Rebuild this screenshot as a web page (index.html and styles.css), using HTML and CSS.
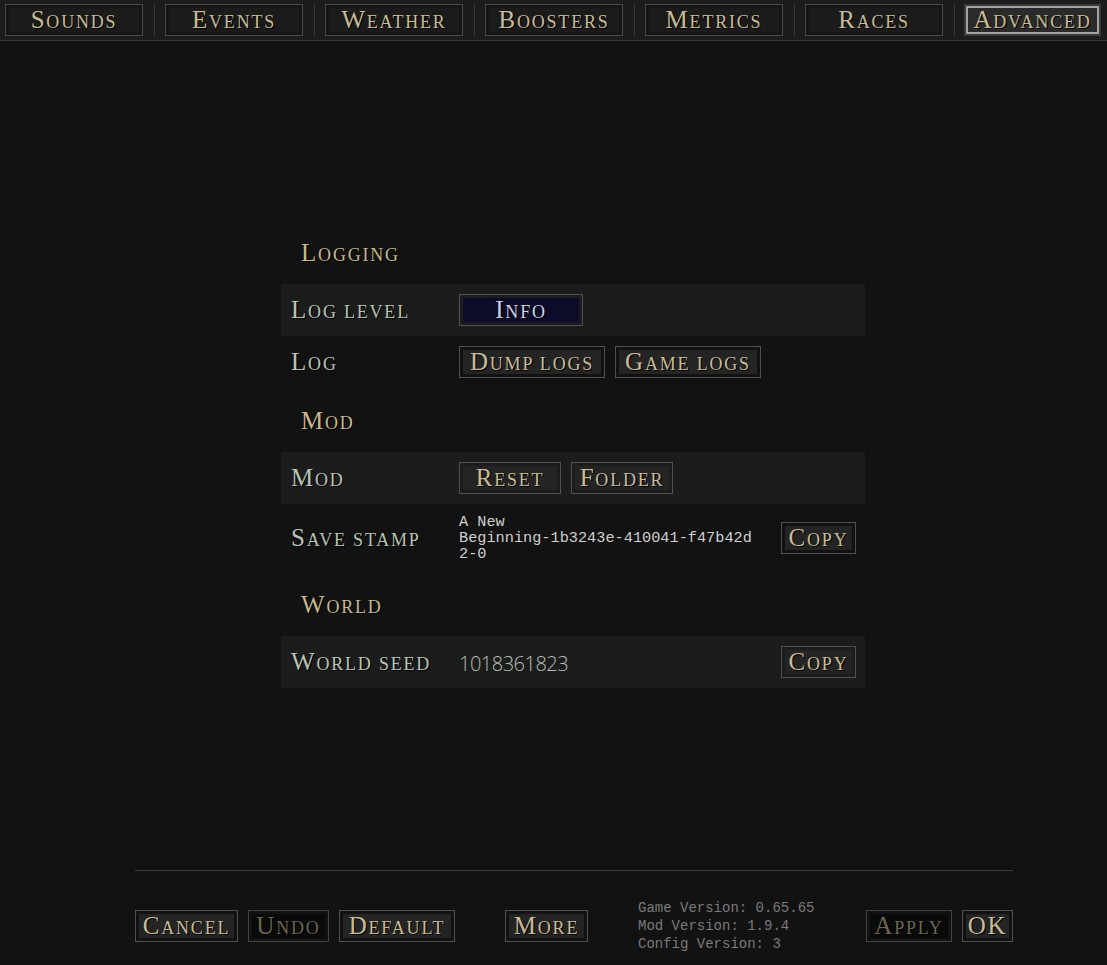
FILE: index.html
```html
<!DOCTYPE html>
<html>
<head>
<meta charset="utf-8">
<link rel="stylesheet" href="styles.css">
</head>
<body>
<div class="topbar">
  <div class="tab">Sounds</div><div class="sep"></div>
  <div class="tab">Events</div><div class="sep"></div>
  <div class="tab">Weather</div><div class="sep"></div>
  <div class="tab">Boosters</div><div class="sep"></div>
  <div class="tab">Metrics</div><div class="sep"></div>
  <div class="tab">Races</div><div class="sep"></div>
  <div class="tab tab-active">Advanced</div>
</div>

<div class="panel">
  <div class="section">Logging</div>
  <div class="row row-alt">
    <div class="label">Log level</div>
    <div class="controls">
      <div class="btn btn-select w-info">Info</div>
    </div>
  </div>
  <div class="row">
    <div class="label">Log</div>
    <div class="controls">
      <div class="btn w-logs">Dump logs</div>
      <div class="btn w-logs">Game logs</div>
    </div>
  </div>
  <div class="section">Mod</div>
  <div class="row row-alt">
    <div class="label">Mod</div>
    <div class="controls">
      <div class="btn w-reset">Reset</div>
      <div class="btn w-reset">Folder</div>
    </div>
  </div>
  <div class="row row-tall">
    <div class="label">Save stamp</div>
    <div class="controls">
      <div class="stamp"><span class="line">A New</span><span class="line">Beginning-1b3243e-410041-f47b42d</span><span class="line">2-0</span></div>
      <div class="btn w-copy push">Copy</div>
    </div>
  </div>
  <div class="section">World</div>
  <div class="row row-alt">
    <div class="label">World seed</div>
    <div class="controls">
      <div class="seed">1018361823</div>
      <div class="btn w-copy push">Copy</div>
    </div>
  </div>
</div>

<div class="footer">
  <div class="rule"></div>
  <div class="actions">
    <div class="btn w-cancel">Cancel</div>
    <div class="btn btn-disabled w-undo">Undo</div>
    <div class="btn w-default">Default</div>
    <div class="btn w-more gap-more">More</div>
    <div class="versions">
      <span class="line">Game Version: 0.65.65</span>
      <span class="line">Mod Version: 1.9.4</span>
      <span class="line">Config Version: 3</span>
    </div>
    <div class="btn btn-disabled w-apply">Apply</div>
    <div class="btn btn-caps w-ok">OK</div>
  </div>
</div>
</body>
</html>
```

FILE: styles.css
```css
* { box-sizing: border-box; }

html, body {
  margin: 0;
  padding: 0;
  background: #121212;
}

body {
  width: 1107px;
  height: 965px;
  overflow: hidden;
  font-family: "Liberation Serif", "Times New Roman", serif;
  font-size: 18px;
  text-transform: uppercase;
  letter-spacing: 1.8px;
}

/* emulated small caps: large initial, small capitals after */
.tab::first-letter,
.section::first-letter,
.label::first-letter,
.btn::first-letter {
  font-size: 25px;
}

/* ---------- top tab bar ---------- */
.topbar {
  height: 41px;
  background: #1c1c1c;
  border-bottom: 1px solid #383838;
  display: flex;
  align-items: flex-start;
  padding: 4px 0 0 5px;
}

.tab {
  flex: 0 0 138px;
  height: 32px;
  border: 1px solid #474747;
  padding: 3px;
  background: #1b1b1b;
  background-clip: content-box;
  box-shadow: inset 0 0 0 3px #151515;
  color: #c8bc94;
  text-shadow: 1px 1px 0 #000;
  text-align: center;
  line-height: 24px;
  white-space: nowrap;
}

.tab-active {
  border: 1px solid #3a3a3a;
  box-shadow: inset 0 0 0 1px #3a3a3a, inset 0 0 0 3px #a2a2a2;
  background: #2a2a2a;
  background-clip: border-box;
  flex-basis: 137px;
  margin-left: -1px;
}

.sep {
  flex: 0 0 1px;
  height: 32px;
  background: #363636;
  margin: 0 10px 0 11px;
}

/* ---------- settings panel ---------- */
.panel {
  width: 584px;
  margin: 179px 0 0 281px;
}

.section {
  height: 64px;
  line-height: 62px;
  padding: 2px 0 0 20px;
  color: #c8b88b;
  text-shadow: 1px 1px 0 #000;
}

.row {
  height: 52px;
  display: flex;
  align-items: center;
  padding: 0 9px 0 10px;
}

.row-alt { background: #1c1c1c; }
.row-tall { height: 68px; }

.label {
  flex: 0 0 168px;
  line-height: 24px;
  padding-top: 1px;
  color: #b8c4b3;
  text-shadow: 1px 1px 0 #000;
  white-space: nowrap;
}

.controls {
  flex: 1;
  display: flex;
  align-items: center;
  gap: 10px;
}

.push { margin-left: auto; }

.btn {
  flex: none;
  height: 32px;
  border: 1px solid #505050;
  padding: 3px;
  background: #242424;
  background-clip: content-box;
  color: #c8bc94;
  text-shadow: 1px 1px 0 #000;
  text-align: center;
  line-height: 24px;
  white-space: nowrap;
}

.btn-caps { font-size: 25px; }

.btn-select {
  background-color: #0c0c2a;
  color: #d2d2e2;
}

.btn-disabled {
  background-color: #0a0a0a;
  color: #6c6751;
  border-color: #424242;
}

.w-info { width: 124px; }
.w-logs { width: 146px; }
.w-reset { width: 102px; }
.w-copy { width: 75px; }
.w-cancel { width: 103px; }
.w-undo { width: 81px; }
.w-default { width: 116px; }
.w-more { width: 83px; }
.w-apply { width: 86px; }
.w-ok { width: 51px; }

.stamp {
  font-family: "Liberation Mono", "Courier New", monospace;
  text-transform: none;
  font-size: 15.25px;
  line-height: 16px;
  letter-spacing: 0;
  color: #cfcfcf;
  display: flex;
  flex-direction: column;
}

.line { display: block; }

.seed {
  font-family: "Open Sans", "Noto Sans", sans-serif;
  font-weight: 300;
  text-transform: none;
  font-size: 20px;
  letter-spacing: -0.5px;
  color: #b5bdb5;
  padding-top: 2px;
}

/* ---------- footer ---------- */
.footer {
  width: 878px;
  margin: 182px 0 0 135px;
}

.rule {
  height: 1px;
  background: #3c3c3c;
}

.actions {
  margin-top: 28px;
  display: flex;
  align-items: center;
  gap: 10px;
}

.gap-more { margin-left: 40px; }

.versions {
  flex: 1;
  margin-left: 40px;
  font-family: "Liberation Mono", "Courier New", monospace;
  text-transform: none;
  font-size: 14px;
  line-height: 18px;
  letter-spacing: 0;
  color: #7a7a7a;
}
```
